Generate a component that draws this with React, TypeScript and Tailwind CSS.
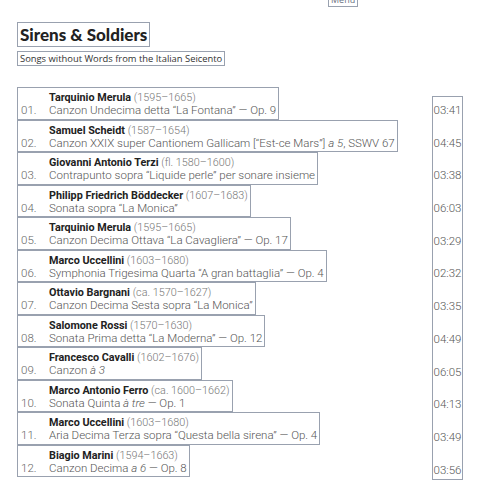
import React from 'react';

interface Track {
  composer: string;
  dates: string;
  title: React.ReactNode;
  time: string;
}

const tracks: Track[] = [
  { composer: 'Tarquinio Merula', dates: '(1595–1665)', title: <>Canzon Undecima detta “La Fontana” — Op. 9</>, time: '03:41' },
  { composer: 'Samuel Scheidt', dates: '(1587–1654)', title: <>Canzon XXIX super Cantionem Gallicam [“Est-ce Mars”] <i>a 5</i>, SSWV 67</>, time: '04:45' },
  { composer: 'Giovanni Antonio Terzi', dates: '(fl. 1580–1600)', title: <>Contrapunto sopra “Liquide perle” per sonare insieme</>, time: '03:38' },
  { composer: 'Philipp Friedrich Böddecker', dates: '(1607–1683)', title: <>Sonata sopra “La Monica”</>, time: '06:03' },
  { composer: 'Tarquinio Merula', dates: '(1595–1665)', title: <>Canzon Decima Ottava “La Cavagliera” — Op. 17</>, time: '03:29' },
  { composer: 'Marco Uccellini', dates: '(1603–1680)', title: <>Symphonia Trigesima Quarta “A gran battaglia” — Op. 4</>, time: '02:32' },
  { composer: 'Ottavio Bargnani', dates: '(ca. 1570–1627)', title: <>Canzon Decima Sesta sopra “La Monica”</>, time: '03:35' },
  { composer: 'Salomone Rossi', dates: '(1570–1630)', title: <>Sonata Prima detta “La Moderna” — Op. 12</>, time: '04:49' },
  { composer: 'Francesco Cavalli', dates: '(1602–1676)', title: <>Canzon <i>à 3</i></>, time: '06:05' },
  { composer: 'Marco Antonio Ferro', dates: '(ca. 1600–1662)', title: <>Sonata Quinta <i>à tre</i> — Op. 1</>, time: '04:13' },
  { composer: 'Marco Uccellini', dates: '(1603–1680)', title: <>Aria Decima Terza sopra “Questa bella sirena” — Op. 4</>, time: '03:49' },
  { composer: 'Biagio Marini', dates: '(1594–1663)', title: <>Canzon Decima <i>a 6</i> — Op. 8</>, time: '03:56' },
];

const App: React.FC = () => {
  return (
    <div className="relative min-h-[485px] bg-white font-['Roboto',sans-serif]">
      {/* Menu button, mostly off screen */}
      <div className="absolute left-[328px] top-[-7px] border border-gray-400 px-[2px] text-[9px] leading-[12px] text-gray-500 font-['Open_Sans',sans-serif]">
        Menu
      </div>

      <div className="pl-[17px] pt-[22px]">
        {/* Header */}
        <div className="w-fit border border-gray-400 px-[2px] text-[17px] leading-[23px] font-black text-[#222] font-['Lato',sans-serif]">
          Sirens &amp; Soldiers
        </div>
        <div className="mt-[4px] w-fit border border-gray-400 px-[2px] text-[9.4px] leading-[13px] text-[#333] font-['Open_Sans',sans-serif]">
          Songs without Words from the Italian Seicento
        </div>

        {/* Track list */}
        <div className="mt-[21px] flex w-[446px]">
          <div className="flex-1 flex flex-col">
            {tracks.map((t, i) => (
              <div key={i} className="flex w-fit border border-gray-400 pt-[3px] pb-[1.5px]">
                <div className="w-[31px] pl-[3px] flex items-end text-[11.5px] leading-[13px] text-[#666] font-light">
                  {String(i + 1).padStart(2, '0')}.
                </div>
                <div className="pr-[2px]">
                  <div className="text-[10.8px] leading-[13px] text-[#222]">
                    <span className="font-bold">{t.composer}</span>{' '}
                    <span className="text-[#777] font-light">{t.dates}</span>
                  </div>
                  <div className="text-[11.5px] leading-[13px] text-[#555] font-light whitespace-nowrap">{t.title}</div>
                </div>
              </div>
            ))}
          </div>

          {/* Durations */}
          <div className="mt-[9px] self-start w-[31px] border border-gray-400 pt-[6px] pb-[2px] flex flex-col items-center gap-[18.7px] text-[11.5px] leading-[14px] text-[#555] font-light">
            {tracks.map((t, i) => (
              <div key={i}>{t.time}</div>
            ))}
          </div>
        </div>
      </div>
    </div>
  );
};

export default App;
